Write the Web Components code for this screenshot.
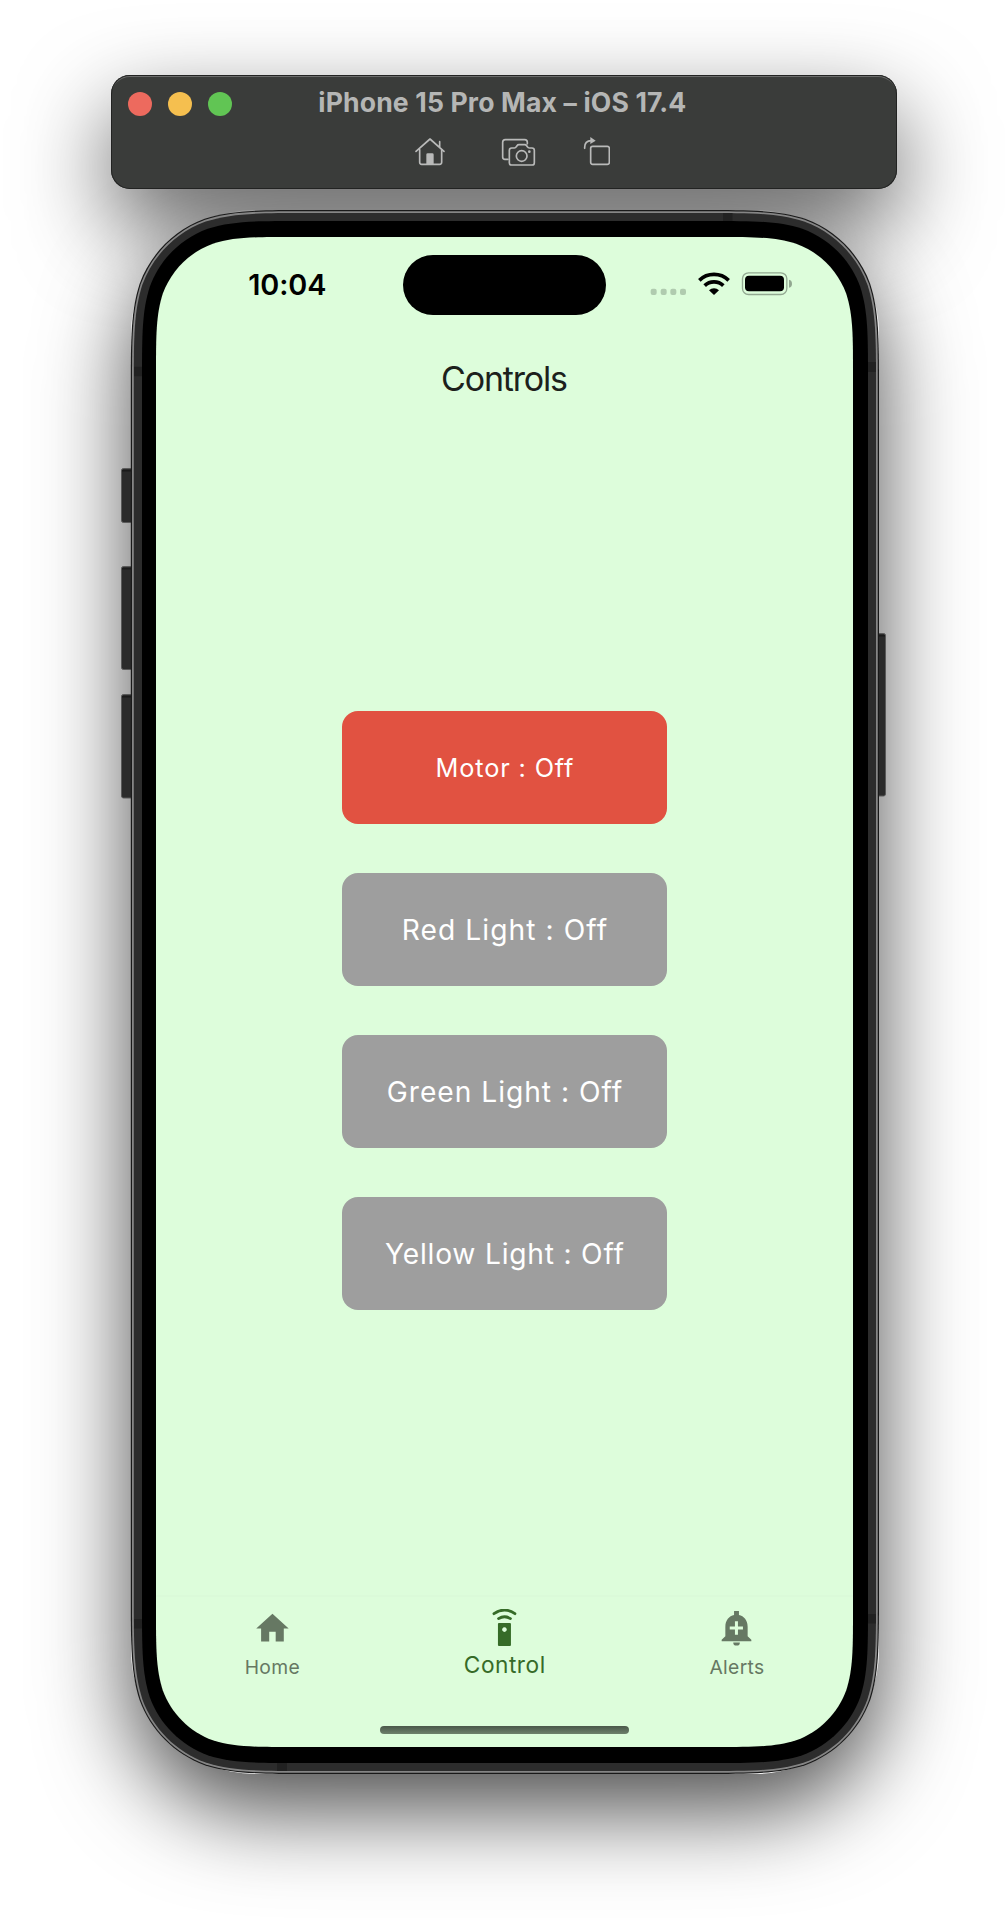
<!DOCTYPE html>
<html lang="en">
<head>
<meta charset="utf-8">
<title>Simulator</title>
<style>
html, body { margin: 0; background: #fff; }
body { width: 1008px; height: 1924px; overflow: hidden; font-family: Inter, "Liberation Sans", sans-serif; }
</style>
</head>
<body>
<sim-stage>
  <sim-toolbar heading="iPhone 15 Pro Max – iOS 17.4"></sim-toolbar>
  <phone-device>
    <status-bar time="10:04"></status-bar>
    <app-header heading="Controls"></app-header>
    <control-list>
      <control-button width="135.6" size="25.3" tone="#e15241" label="Motor : Off"></control-button>
      <control-button width="203" size="28.2" label="Red Light : Off"></control-button>
      <control-button width="234" size="28.2" label="Green Light : Off"></control-button>
      <control-button width="238.6" size="28.2" label="Yellow Light : Off"></control-button>
    </control-list>
    <tab-bar></tab-bar>
  </phone-device>
</sim-stage>
<script>
const define = (name, render, after) => customElements.define(name, class extends HTMLElement {
  connectedCallback() {
    if (this.shadowRoot) return;
    this.attachShadow({ mode: 'open' }).innerHTML = render(this);
    if (after) after(this);
  }
});
const attr = (el, n, d = '') => el.getAttribute(n) ?? d;

/* A single line of text tracked out to an exact ink width. */
define('fit-text', el => `<style>
:host { display: flex; justify-content: center; flex: none; width: ${attr(el, 'width')}px; white-space: nowrap;
  font-size: ${attr(el, 'size')}px; font-weight: ${attr(el, 'weight', '400')}; line-height: ${attr(el, 'line', '40')}px; }
span { flex: none; }
</style><span>${attr(el, 'text')}</span>`, el => {
  const t = attr(el, 'text');
  const c = document.createElement('canvas').getContext('2d');
  c.font = `${attr(el, 'weight', '400')} ${attr(el, 'size')}px Inter`;
  const m = c.measureText(t);
  const ink = m.actualBoundingBoxLeft + m.actualBoundingBoxRight;
  const ls = (Number(attr(el, 'width')) - ink) / (t.length - 1);
  const s = el.shadowRoot.querySelector('span');
  s.style.letterSpacing = ls + 'px';
  s.style.marginRight = -ls + 'px';
});

define('sim-stage', () => `<style>
:host { display: flex; flex-direction: column; align-items: flex-start; box-sizing: border-box; isolation: isolate; width: 1008px; height: 1924px; padding-top: 75px; gap: 48px; background: #fff; }
::slotted(sim-toolbar) { margin-left: 111px; }
::slotted(phone-device) { margin-left: 156px; }
</style><slot></slot>`);

define('sim-toolbar', el => `<style>
:host { display: flex; flex-direction: column; box-sizing: border-box; width: 786px; height: 114px; border-radius: 19px; background: #3a3c3a;
  box-shadow: inset 0 0 0 1px #222322, inset 0 2px 0 0 #6b6c6b, 0 36px 90px rgba(0,0,0,.62); }
.top { display: flex; align-items: center; height: 58px; padding-left: 17px; }
.dots { display: flex; gap: 16px; }
i { width: 24px; height: 24px; border-radius: 50%; }
fit-text { color: #b5b6b5; margin: -4px 0 0 87.3px; }
.tools { display: flex; padding: 4px 0 0 304px; }
svg { display: block; fill: none; stroke: #b9bab9; stroke-width: 5; stroke-linecap: round; stroke-linejoin: round; }
.cam { margin: 0 47px 0 55px; }
.f { fill: #b9bab9; stroke: none; }
</style>
<div class="top"><div class="dots"><i style="background:#ed6a5e"></i><i style="background:#f5bf4f"></i><i style="background:#61c554"></i></div>
<fit-text text="${attr(el, 'heading')}" width="366" size="26.6" weight="700"></fit-text></div>
<div class="tools">
<svg width="31" height="30" viewBox="45 51 93 90"><path d="M48 94 90 57l42 37M119 65v16"/><path d="M59 89v38q0 6 6 6h54q6 0 6-6V89"/><path class="f" d="M79 132v-28q0-4 4-4h14q4 0 4 4v28z"/></svg>
<svg class="cam" width="35" height="30" viewBox="303 51 105 90"><path d="M324 118h-9q-7 0-7-7V67q0-8 8-8h58q8 0 8 8v4"/><path d="M335 84h8q4 0 6-4l2-3q2-3 6-3h17q4 0 6 3l2 3q2 4 6 4h8q7 0 7 7v37q0 7-7 7h-61q-7 0-7-7V91q0-7 7-7z"/><circle cx="365" cy="108" r="16"/><circle class="f" cx="388" cy="95" r="4"/></svg>
<svg width="27" height="30" viewBox="549 51 81 90"><rect x="572" y="79" width="56" height="54" rx="6"/><path d="M554 85v-3q0-19 20-20"/><path class="f" d="M571 51l16 11-16 10z"/></svg>
</div>`);

/* Rounded rectangle with continuous-curvature corners. */
const squircle = (x0, y0, x1, y1, r) => {
  const a = 1.5287 * r, b = 1.0885 * r, c = .8684 * r, d = .6315 * r, e = .0749 * r, f = .3728 * r, g = .1691 * r;
  return `M${x0 + a} ${y0}H${x1 - a}C${x1 - b} ${y0} ${x1 - c} ${y0} ${x1 - d} ${y0 + e}C${x1 - f} ${y0 + g} ${x1 - g} ${y0 + f} ${x1 - e} ${y0 + d}C${x1} ${y0 + c} ${x1} ${y0 + b} ${x1} ${y0 + a}` +
    `V${y1 - a}C${x1} ${y1 - b} ${x1} ${y1 - c} ${x1 - e} ${y1 - d}C${x1 - g} ${y1 - f} ${x1 - f} ${y1 - g} ${x1 - d} ${y1 - e}C${x1 - c} ${y1} ${x1 - b} ${y1} ${x1 - a} ${y1}` +
    `H${x0 + a}C${x0 + b} ${y1} ${x0 + c} ${y1} ${x0 + d} ${y1 - e}C${x0 + f} ${y1 - g} ${x0 + g} ${y1 - f} ${x0 + e} ${y1 - d}C${x0} ${y1 - c} ${x0} ${y1 - b} ${x0} ${y1 - a}` +
    `V${y0 + a}C${x0} ${y0 + b} ${x0} ${y0 + c} ${x0 + e} ${y0 + d}C${x0 + g} ${y0 + f} ${x0 + f} ${y0 + g} ${x0 + d} ${y0 + e}C${x0 + c} ${y0} ${x0 + b} ${y0} ${x0 + a} ${y0}Z`;
};
const key = (x, y, w, h) => `<rect x="${x + .5}" y="${y + .5}" width="${w - 1}" height="${h - 1}" rx="2" fill="#2b2b2b" stroke="#5a5a5a"/><rect x="${x + 1}" y="${y + 2}" width="${w - 2}" height="1.5" fill="#1b1b1b"/>`;
/* The shade sits under the toolbar; the body of the phone sits over the toolbar's shadow. */
define('phone-device', () => `<style>
:host { display: flex; flex-direction: column; position: relative; width: 697px; height: 1510px; }
.shade { position: absolute; z-index: -1; inset: -27px -26px -27px -25px; border-radius: 124px; box-shadow: 0 36px 90px rgba(0,0,0,.7); }
svg { position: absolute; z-index: 0; left: -36px; top: -27px; pointer-events: none; }
::slotted(*) { position: relative; z-index: 1; }
</style>
<div class="shade"></div>
<svg width="768" height="1565" viewBox="120 210 768 1565">
${key(121, 468, 14, 55)}${key(121, 566, 14, 104)}${key(121, 694, 14, 104.5)}${key(872, 633, 14, 163.5)}
<path fill="#191919" d="${squircle(130.8, 210, 879, 1774, 117)}"/>
<path fill="#858585" d="${squircle(132, 211.2, 877.8, 1772.8, 115.8)}"/>
<path fill="#2c2c2c" d="${squircle(133.8, 213, 876, 1771, 113.8)}"/>
<path fill="#212121" d="M134 366.7h8v9.5h-8zM868 362h8v10h-8zM723 213h9.5v8H723zM277 1763h10v8h-10zM134 1619h8v9.5h-8zM868 1614h8v9.5h-8z"/>
<path fill="#000" d="${squircle(142, 221, 868, 1763, 104)}"/>
<path fill="#ddfddb" d="${squircle(156, 237, 853, 1747, 90)}"/>
</svg>
<slot></slot>`);

define('status-bar', el => `<style>
:host { display: flex; align-items: center; flex: none; box-sizing: border-box; height: 97px; padding-left: 93.3px; color: #000; }
fit-text { margin-top: -2px; }
.island { width: 203.4px; height: 60px; border-radius: 30px; background: #000; margin: -1px 44.2px 0 77.8px; flex: none; }
svg { display: block; flex: none; }
</style>
<fit-text text="${attr(el, 'time')}" width="76" size="28.8" weight="600"></fit-text>
<div class="island"></div>
<svg width="142" height="26" viewBox="90 213 426 78" style="margin:-3px 0 0 -1px">
<g fill="#b0cbaf"><rect x="92" y="266" width="18" height="19" rx="6"/><rect x="122" y="266" width="18" height="19" rx="6"/><rect x="151" y="266" width="18" height="19" rx="6"/><rect x="180" y="266" width="18" height="19" rx="6"/></g>
<g fill="none" stroke="#000" stroke-width="11"><path d="M238 241a63 63 0 0 1 88 0"/><path d="M254 257a40 40 0 0 1 56 0"/></g><path d="M267 271a22 22 0 0 1 30 0l-15 14z"/>
<rect x="367.5" y="218.5" width="133" height="65" rx="18" fill="none" stroke="#92a891" stroke-width="4"/><rect x="375" y="227" width="117" height="47" rx="12"/><path d="M507 239q9 2 9 12t-9 12z" fill="#92a891"/>
</svg>`);

define('app-header', el => `<style>
:host { display: flex; align-items: center; justify-content: center; flex: none; height: 91px; color: #1c211c; }
fit-text { margin: -2px 0 0 0; }
</style><fit-text text="${attr(el, 'heading')}" width="124" size="34" weight="370"></fit-text>`);

define('control-list', () => `<style>
:host { display: flex; flex-direction: column; align-items: center; justify-content: center; gap: 48.5px; flex: 1; padding-top: 1px; }
</style><slot></slot>`);

define('control-button', el => `<style>
:host { display: block; }
button { all: unset; display: flex; align-items: center; justify-content: center; width: 324.4px; height: 113.5px; border-radius: 16px; background: ${attr(el, 'tone', '#9e9e9e')}; color: #fff; }
</style><button><fit-text text="${attr(el, 'label')}" width="${attr(el, 'width')}" size="${attr(el, 'size')}" weight="380"></fit-text></button>`);

define('tab-item', el => `<style>
:host { display: flex; flex-direction: column; align-items: center; flex: 1; gap: ${attr(el, 'gap')}px; color: ${attr(el, 'tone')}; }
</style><slot></slot><fit-text text="${attr(el, 'label')}" width="${attr(el, 'width')}" size="${attr(el, 'size')}" line="24" weight="370"></fit-text>`);

define('tab-bar', () => `<style>
:host { display: flex; flex-direction: column; align-items: center; flex: none; box-sizing: border-box; height: 152px; border-top: 2px solid #dbfad9; }
nav { display: flex; align-self: stretch; height: 129px; padding-top: 12.3px; box-sizing: border-box; }
svg { display: block; width: 38.9px; height: 38.9px; fill: currentColor; }
.bar { width: 249.6px; height: 8px; border-radius: 4px; background: linear-gradient(#4a5849, #6d806b); }
</style>
<nav>
<tab-item label="Home" width="53.7" size="19.3" gap="6.8" tone="#667863"><svg viewBox="0 0 24 24"><path d="M10 20v-6h4v6h5v-8h3L12 3 2 12h3v8z"/></svg></tab-item>
<tab-item label="Control" width="78.8" size="22.7" gap="5" tone="#366b28"><svg viewBox="375.05 49.7 38.9 38.9"><path d="M384 54.4q10.5-7.3 21 0M388.6 59.3q5.900-3.700 11.900 0" fill="none" stroke="currentColor" stroke-width="2.8" stroke-linecap="round"/><path fill-rule="evenodd" d="M389 63.7h11q1 0 1 1v21q0 1-1 1h-11q-1 0-1-1v-21q0-1 1-1zM394.5 68a2.3 2.3 0 1 0 .01 0z"/></svg></tab-item>
<tab-item label="Alerts" width="54.5" size="19.3" gap="6.8" tone="#667863"><svg viewBox="157.35 49.8 38.9 38.9"><path fill-rule="evenodd" d="M162 82v-1.400l3.700-3.600v-9.500c0-6.500 3.800-10.700 8.700-11.700v-4.100h4.900v4.100c4.900 1 8.700 5.200 8.700 11.700V77l3.700 3.600V82zM175.300 62v5.300h-5.200v2.900h5.200v5.400h3v-5.400h5v-2.900h-5V62zM173.600 83.200h6.600a3.300 3.200 0 0 1-6.600 0z"/></svg></tab-item>
</nav>
<div class="bar"></div>`);
</script>
</body>
</html>
